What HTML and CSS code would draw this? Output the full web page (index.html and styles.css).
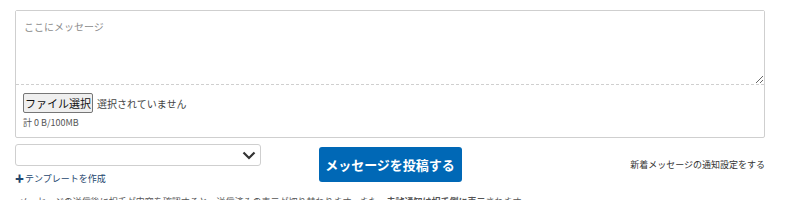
FILE: index.html
```html
<!DOCTYPE html>
<html lang="ja">
<head>
    <meta charset="UTF-8">
    <meta name="viewport" content="width=device-width, initial-scale=1.0">
    <title>メッセージ</title>
    <link rel="stylesheet" href="styles.css">
</head>
<body class="body">
    <form class="post" onsubmit="return false;">
        <div class="post__box">
            <textarea class="post__text" placeholder="ここにメッセージ"></textarea>
            <div class="post__files">
                <div class="post__file-row">
                    <button type="button" class="post__file-btn">ファイル選択</button>
                    <span class="post__file-name">選択されていません</span>
                </div>
                <p class="post__size">計 0 B/100MB</p>
            </div>
        </div>

        <div class="post__bottom">
            <div class="post__template">
                <div class="post__select">
                    <svg class="post__chevron" width="14" height="9" viewBox="0 0 14 9">
                        <path d="M1.5 1.5 L7 7 L12.5 1.5" fill="none" stroke="#333" stroke-width="2.2"/>
                    </svg>
                </div>
                <a class="post__add" href="#"><span class="post__plus">✚</span>テンプレートを作成</a>
            </div>
            <button class="post__submit">メッセージを投稿する</button>
            <a class="post__notify" href="#">新着メッセージの通知設定をする</a>
        </div>

        <p class="post__note">メッセージの送信後に相手が内容を確認すると、送信済みの表示が切り替わります。また、<b>未読通知は相手側に表示</b>されます。</p>
    </form>
</body>
</html>
```

FILE: styles.css
```css
* {
    margin: 0;
    padding: 0;
    box-sizing: border-box;
}

.body {
    padding: 10px 21px 0 15px;
    font-family: "Noto Sans CJK JP", "Noto Sans", sans-serif;
    color: #333;
    background: #fff;
    overflow: hidden;
}

.post__box {
    border: 1px solid #cfcfcf;
    border-radius: 2px;
}

.post__text {
    display: block;
    width: 100%;
    height: 74px;
    padding: 8px 8px;
    border: none;
    border-bottom: 1px dashed #cfcfcf;
    font-family: inherit;
    font-size: 10px;
    color: #333;
    resize: vertical;
    outline: none;
}

.post__text::placeholder {
    color: #8c8c8c;
}

.post__files {
    padding: 8px 7px 8px;
}

.post__file-row {
    display: flex;
    align-items: center;
    gap: 4px;
}

.post__file-btn {
    width: 70px;
    height: 20px;
    padding: 0;
    border: 1px solid #767676;
    border-radius: 2px;
    background: #efefef;
    font-family: inherit;
    font-size: 11px;
    color: #111;
    white-space: nowrap;
}

.post__file-name {
    font-size: 10px;
    color: #444;
}

.post__size {
    margin-top: 3px;
    font-size: 9px;
    color: #555;
}

.post__bottom {
    margin-top: 6px;
    display: grid;
    grid-template-columns: 1fr auto 1fr;
    align-items: center;
}

.post__select {
    position: relative;
    width: 246px;
    height: 22px;
    border: 1px solid #cfcfcf;
    border-radius: 3px;
}

.post__chevron {
    position: absolute;
    right: 4px;
    top: 6px;
}

.post__add {
    display: block;
    margin-top: 6px;
    font-size: 9px;
    color: #24466e;
    text-decoration: none;
}

.post__plus {
    font-size: 9px;
    margin-right: 1px;
}

.post__submit {
    width: 143px;
    height: 35px;
    border: none;
    border-radius: 3px;
    background: #0068b6;
    color: #fff;
    font-family: inherit;
    font-size: 13px;
    font-weight: bold;
}

.post__notify {
    justify-self: end;
    font-size: 9px;
    color: #333;
    text-decoration: none;
}

.post__note {
    margin-top: 10px;
    padding-left: 4px;
    font-size: 9px;
    color: #555;
    white-space: nowrap;
}
```
